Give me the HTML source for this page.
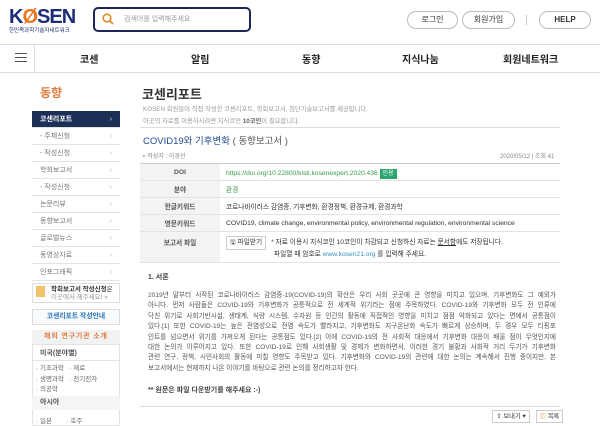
<!DOCTYPE html><html><head><meta charset="utf-8"><style>
*{margin:0;padding:0;box-sizing:border-box}
body{width:600px;height:426px;overflow:hidden;background:#fff;font-family:"Liberation Sans","Noto Sans CJK KR",sans-serif;color:#333;position:relative}
.a{position:absolute;white-space:nowrap}
.btn{position:absolute;border:1px solid #bbb;border-radius:12px;height:18px;font-size:8px;text-align:center;line-height:16px;color:#333}
.side div.it{position:absolute;left:32px;width:88px;height:17px;border-bottom:1px solid #e3e3e3;font-size:7px;color:#777;line-height:17px;padding-left:8px}
.side div.it:after{content:"›";position:absolute;right:8px;color:#bbb}
td{font-size:6.7px;border-bottom:1px solid #e3e3e3;padding:0 6px;height:17px}
td.h{background:#f3f3f3;text-align:center;width:80px;color:#555;font-weight:bold}
.p{position:absolute;left:148px;width:408px;font-size:6.6px;color:#555;line-height:10.4px}
.p div{text-align:justify;text-align-last:justify;white-space:nowrap;height:10.4px}
.p div.l{text-align-last:left}
</style></head><body>
<div class="a" style="left:9px;top:6px;font-size:20px;font-weight:bold;color:#1d2d78;letter-spacing:-1px">K<span style="color:#e87722">Ø</span>SEN</div>
<div class="a" style="left:9px;top:26px;font-size:5.5px;color:#1d2d78">한민족과학기술자네트워크</div>
<div class="a" style="left:93px;top:7px;width:158px;height:25px;border:2px solid #1d2656;border-radius:5px"></div>
<svg class="a" style="left:102px;top:13px" width="12" height="12"><circle cx="5" cy="5" r="3.8" fill="none" stroke="#e08a2c" stroke-width="1.6"/><line x1="8" y1="8" x2="11" y2="11" stroke="#e08a2c" stroke-width="1.6"/></svg>
<div class="a" style="left:124px;top:14px;font-size:7px;color:#999">검색어를 입력해주세요</div>
<div class="btn" style="left:407px;top:11px;width:51px">로그인</div>
<div class="btn" style="left:462px;top:11px;width:53px">회원가입</div>
<div class="a" style="left:526px;top:15px;width:1px;height:10px;background:#ccc"></div>
<div class="btn" style="left:539px;top:11px;width:52px;font-weight:bold">HELP</div>
<div class="a" style="left:0;top:44px;width:600px;height:29px;border-top:1px solid #ddd;border-bottom:1px solid #ddd"></div>
<div class="a" style="left:34px;top:44px;width:1px;height:29px;background:#ddd"></div>
<div class="a" style="left:15px;top:53px;width:12px;height:1.3px;background:#555;box-shadow:0 4px #555,0 8px #555"></div>
<div class="a" style="left:0;top:51px;width:600px;font-size:10px;font-weight:bold;color:#222">
<span class="a" style="left:80px">코센</span><span class="a" style="left:191px">알림</span><span class="a" style="left:302px">동향</span><span class="a" style="left:402px">지식나눔</span><span class="a" style="left:503px">회원네트워크</span></div>
<div class="side">
<div class="a" style="left:40px;top:84px;font-size:12px;font-weight:bold;color:#e07b3c">동향</div>
<div class="it" style="top:111px;background:#1b2f57;color:#fff;font-weight:bold">코센리포트</div>
<div class="it" style="top:128px">- 주제신청</div>
<div class="it" style="top:145px">- 작성신청</div>
<div class="it" style="top:162px">학회보고서</div>
<div class="it" style="top:179px">- 작성신청</div>
<div class="it" style="top:196px">논문리뷰</div>
<div class="it" style="top:213px">동향보고서</div>
<div class="it" style="top:230px">글로벌뉴스</div>
<div class="it" style="top:247px">동영상자료</div>
<div class="it" style="top:264px">인포그래픽</div>
</div>
<div class="a" style="left:32px;top:283px;width:88px;height:20px;border:1px solid #ddd;font-size:6.5px;line-height:8px;padding:2px 0 0 18px;color:#333"><b>학회보고서 작성신청</b>은<br><span style="color:#999">이곳에서 해주세요! »</span></div>
<div class="a" style="left:36px;top:286px;width:9px;height:11px;background:#f0c36a"></div>
<div class="a" style="left:32px;top:309px;width:88px;height:16px;border:1px solid #ddd;background:#f7fbfd;font-size:6.8px;color:#2a76b8;text-align:center;line-height:14px;font-weight:bold">코센리포트 작성안내</div>
<div class="a" style="left:32px;top:330px;width:88px;height:14px;background:#f2f2f2;font-size:6.8px;color:#e07b3c;text-align:center;line-height:14px;font-weight:bold;letter-spacing:1px">해외 연구기관 소개</div>
<div class="a" style="left:32px;top:344px;width:88px;height:82px;border:1px solid #e3e3e3"></div>
<div class="a" style="left:40px;top:348px;font-size:7px;color:#555;font-weight:bold">미국(분야별)</div>
<div class="a" style="left:32px;top:360px;width:88px;height:1px;background:#e3e3e3"></div>
<div class="a" style="left:36px;top:364px;font-size:6.5px;color:#666;line-height:10.5px">· 기초과학 &nbsp;&nbsp;· 재료<br>· 생명과학 &nbsp;&nbsp;· 전기전자<br>· 의공학</div>
<div class="a" style="left:32px;top:396px;width:88px;height:14px;background:#f5f5f5;font-size:7px;color:#555;font-weight:bold;padding-left:8px;line-height:14px">아시아</div>
<div class="a" style="left:36px;top:415px;font-size:6.5px;color:#666">· 일본 &nbsp;&nbsp;&nbsp;&nbsp;&nbsp;&nbsp;&nbsp;· 호주</div>

<div class="a" style="left:142px;top:84px;font-size:13px;font-weight:bold;color:#333">코센리포트</div>
<div class="a" style="left:143px;top:104px;font-size:6.3px;color:#999;line-height:12px">KOSEN 회원들이 직접 작성한 코센리포트, 학회보고서, 첨단기술보고서를 제공합니다.<br>이곳의 자료를 이용하시려면 지식코인 <b style="color:#666">10코인</b>이 필요합니다.</div>
<div class="a" style="left:140px;top:127px;width:420px;height:1px;background:#ddd"></div>
<div class="a" style="left:143px;top:133px;font-size:9.5px;color:#1e4a8e">COVID19와 기후변화 <span style="color:#555">( 동향보고서 )</span></div>
<div class="a" style="left:142px;top:151px;font-size:6px;color:#888">◓ 작성자 : 이경선</div>
<div class="a" style="left:500px;top:151px;font-size:6px;color:#888">2020/05/12 | 조회 41</div>
<table class="a" style="left:140px;top:163px;width:420px;border-collapse:collapse;border-top:1px solid #ccc">
<tr><td class="h">DOI</td><td style="color:#3a9b4a">https://doi.org/10.22800/kisti.kosenexpert.2020.436 <span style="background:#2aa56e;color:#fff;padding:2px 3px;font-size:6px">인용</span></td></tr>
<tr><td class="h">분야</td><td style="color:#3a9b4a">환경</td></tr>
<tr><td class="h">한글키워드</td><td>코로나바이러스 감염증, 기후변화, 환경정책, 환경규제, 환경과학</td></tr>
<tr><td class="h">영문키워드</td><td>COVID19, climate change, environmental policy, environmental regulation, environmental science</td></tr>
<tr><td class="h" style="height:31px;vertical-align:top;padding-top:5px">보고서 파일</td><td style="height:31px;vertical-align:top;padding-top:4px;line-height:10px"><span style="display:inline-block;border:1px solid #ccc;padding:1px 3px;margin-right:5px">🖫 파일받기</span>* 자료 이용시 지식코인 10코인이 차감되고 신청하신 자료는 <u>문서함</u>에도 저장됩니다.<br><span style="padding-left:48px">파일열 때 암호로 <span style="color:#3a8fc0">www.kosen21.org</span> 를 입력해 주세요.</span></td></tr>
</table>
<div class="a" style="left:148px;top:272px;font-size:7px;font-weight:bold;color:#444">1. 서론</div>
<div class="p" style="top:291px">
<div>2019년 말부터 시작된 코로나바이러스 감염증-19(COVID-19)의 확산은 우리 사회 곳곳에 큰 영향을 미치고 있으며, 기후변화도 그 예외가</div>
<div>아니다. 먼저 사람들은 COVID-19와 기후변화가 공통적으로 전 세계적 위기라는 점에 주목하였다. COVID-19와 기후변화 모두 전 인류에</div>
<div>닥친 위기로 사회기반시설, 생태계, 식량 시스템, 수자원 등 인간의 활동에 직접적인 영향을 미치고 점점 악화되고 있다는 면에서 공통점이</div>
<div>있다.[1] 또한 COVID-19는 높은 전염성으로 전염 속도가 빨라지고, 기후변화도 지구온난화 속도가 빠르게 상승하며, 두 경우 모두 티핑포</div>
<div>인트를 넘으면서 위기를 가져오게 된다는 공통점도 있다.[2] 이에 COVID-19의 전 사회적 대응에서 기후변화 대응이 배울 점이 무엇인지에</div>
<div>대한 논의가 이루어지고 있다. 또한 COVID-19로 인해 사회생활 및 경제가 변화하면서, 이러한 경기 불황과 사회적 거리 두기가 기후변화</div>
<div>관련 연구, 정책, 시민사회의 활동에 미칠 영향도 주목받고 있다. 기후변화와 COVID-19의 관련에 대한 논의는 계속해서 진행 중이지만, 본</div>
<div class="l">보고서에서는 현재까지 나온 이야기를 바탕으로 관련 논의를 정리하고자 한다.</div>
</div>
<div class="a" style="left:148px;top:385px;font-size:7px;font-weight:bold;color:#444">** 원문은 파일 다운받기를 해주세요 :-)</div>
<div class="a" style="left:140px;top:406px;width:420px;height:1px;background:#ddd"></div>
<div class="a" style="left:492px;top:410px;width:38px;height:13px;border:1px solid #ccc;font-size:6.3px;line-height:11px;text-align:center">⇪ 보내기 ▾</div>
<div class="a" style="left:536px;top:410px;width:27px;height:13px;border:1px solid #ccc;font-size:6.3px;line-height:11px;text-align:center"><span style="color:#c9a640">▥</span> 목록</div>
</body></html>
